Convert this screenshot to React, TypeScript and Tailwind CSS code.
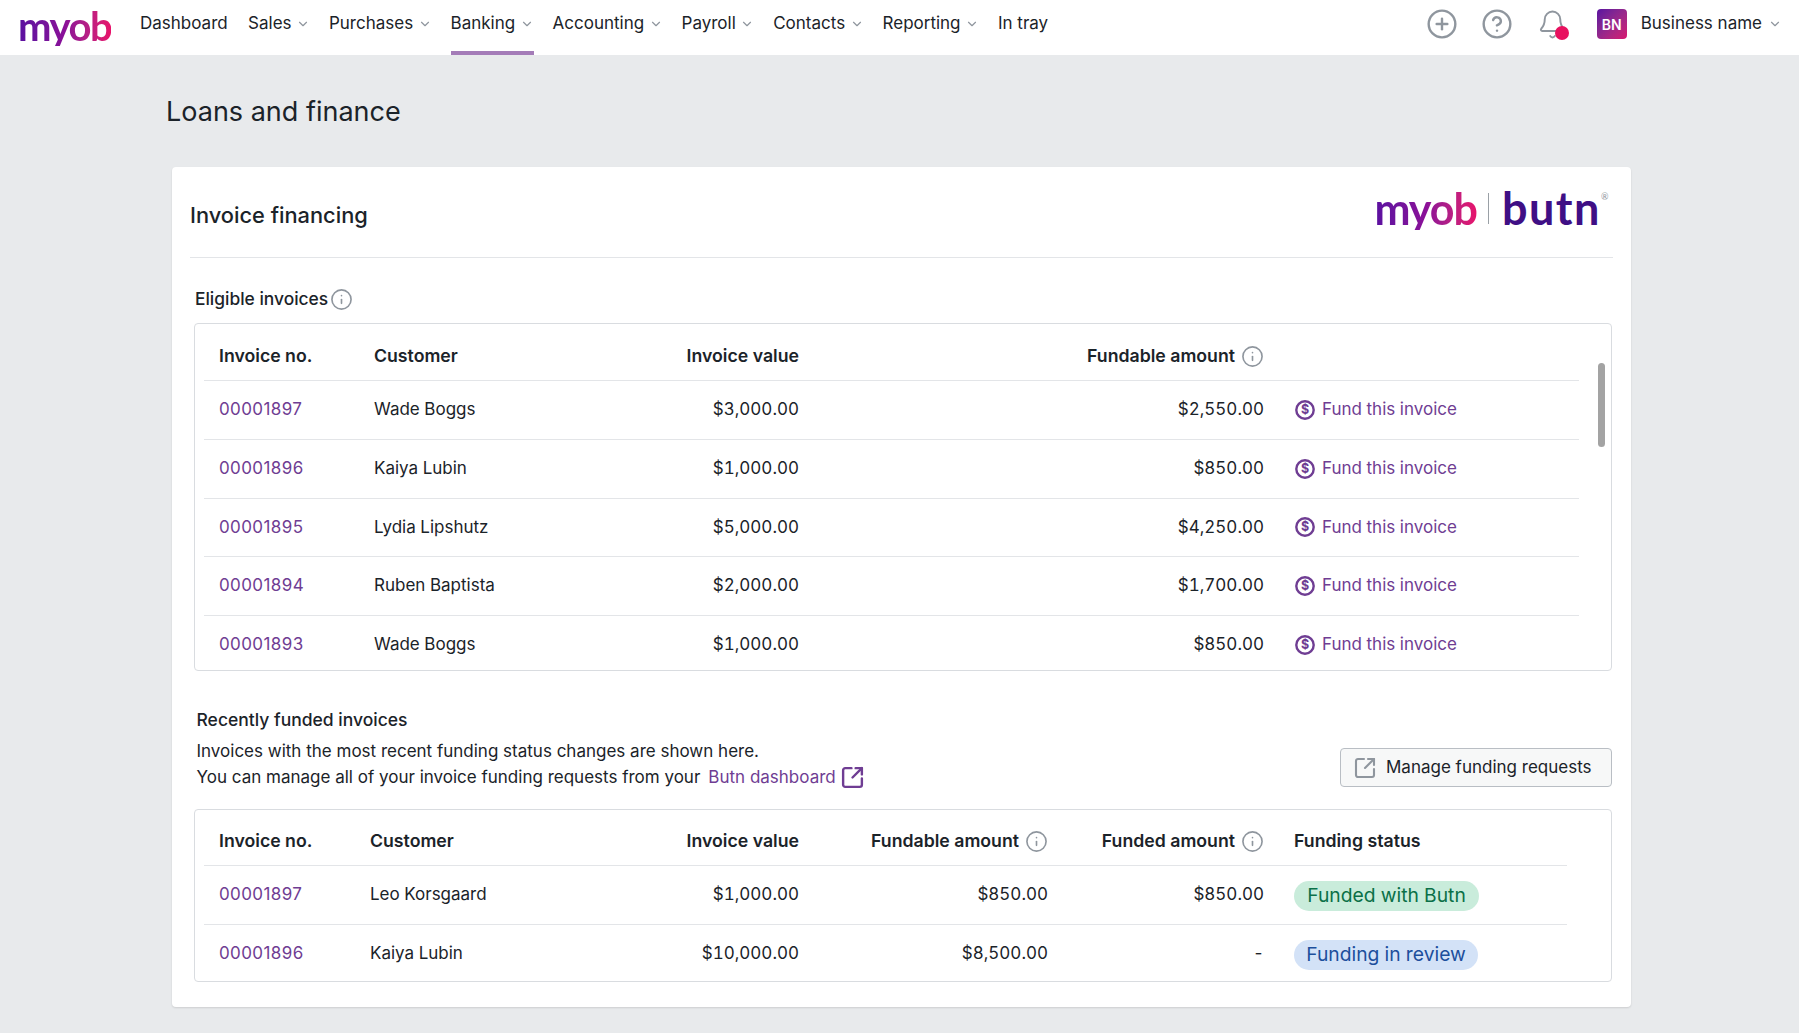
import { Bell, ChevronDown, CircleHelp, CirclePlus, Info, SquareArrowOutUpRight } from "lucide-react";

type NavItem = { label: string; menu: boolean; active?: boolean };

const navItems: NavItem[] = [
    { label: "Dashboard", menu: false },
    { label: "Sales", menu: true },
    { label: "Purchases", menu: true },
    { label: "Banking", menu: true, active: true },
    { label: "Accounting", menu: true },
    { label: "Payroll", menu: true },
    { label: "Contacts", menu: true },
    { label: "Reporting", menu: true },
    { label: "In tray", menu: false },
];

const eligible = [
    ["00001897", "Wade Boggs", "$3,000.00", "$2,550.00"],
    ["00001896", "Kaiya Lubin", "$1,000.00", "$850.00"],
    ["00001895", "Lydia Lipshutz", "$5,000.00", "$4,250.00"],
    ["00001894", "Ruben Baptista", "$2,000.00", "$1,700.00"],
    ["00001893", "Wade Boggs", "$1,000.00", "$850.00"],
];

const funded = [
    { no: "00001897", customer: "Leo Korsgaard", value: "$1,000.00", fundable: "$850.00", amount: "$850.00", status: "Funded with Butn", badge: "bg-[#c9ecdb] text-[#0b7048] w-[185px]" },
    { no: "00001896", customer: "Kaiya Lubin", value: "$10,000.00", fundable: "$8,500.00", amount: "-", status: "Funding in review", badge: "bg-[#d3e2f7] text-[#1d4f9c] w-[184px]" },
];

const eligibleCols = "grid grid-cols-[155px_200px_225px_465px_1fr] items-center pl-[15px]";
const fundedCols = "grid grid-cols-[151px_200px_229px_249px_216px_1fr] items-center pl-[15px]";
const headCell = "flex items-center justify-end gap-[6px]";
const invoiceLink = "font-normal normal-nums tracking-[0.4px] text-[#6f3d93]";

function Logo({ className }: { className: string }) {
    return (
        <span className={`bg-gradient-to-r from-[#5a0fa0] via-[#8a0f98] to-[#e8116a] bg-clip-text font-['Lato',sans-serif] font-bold text-transparent ${className}`}>
            myob
        </span>
    );
}

function InfoIcon() {
    return <Info size={23} strokeWidth={1.7} className="shrink-0 text-[#8f969e]" />;
}

function DollarIcon() {
    return (
        <svg viewBox="0 0 20 20" className="h-[20px] w-[20px] shrink-0">
            <circle cx="10" cy="10" r="8.7" fill="none" stroke="currentColor" strokeWidth="2.4" />
            <text x="10" y="14.4" textAnchor="middle" fontSize="12.5" fontWeight="700" fill="currentColor">
                $
            </text>
        </svg>
    );
}

export default function App() {
    return (
        <div className="min-h-screen bg-[#e8eaec] font-['Inter',sans-serif] text-[17px] text-[#1b2329]">
            <header className="flex h-[55px] items-stretch bg-white">
                <div className="flex w-[140px] shrink-0 items-center pb-[4px] pl-[18px]">
                    <Logo className="text-[40px] leading-none tracking-[-1.5px]" />
                </div>
                <nav className="flex gap-[19px]">
                    {navItems.map((item) => (
                        <div
                            key={item.label}
                            className={`flex items-center gap-[4.4px] border-b-[4px] pb-[7px] pt-[3px] first:mr-[1.4px] ${item.active ? "border-[#a47cb8]" : "border-transparent"}`}
                        >
                            <span>{item.label}</span>
                            {item.menu && <ChevronDown size={14} className="text-[#8f969e]" />}
                        </div>
                    ))}
                </nav>
                <div className="ml-auto flex items-center pb-[11px] pr-[17px] pt-[4px] text-[#8f969e]">
                    <CirclePlus size={32} strokeWidth={1.8} />
                    <CircleHelp size={32} strokeWidth={1.8} className="ml-[23px]" />
                    <div className="relative ml-[24px]">
                        <Bell size={31} strokeWidth={1.5} />
                        <span className="absolute left-[18px] top-[17px] h-[14px] w-[14px] rounded-full bg-[#e8115f]" />
                    </div>
                    <div className="ml-[29px] flex h-[30px] w-[30px] items-center justify-center rounded-[4px] bg-gradient-to-br from-[#5a0fa0] to-[#d8116f] text-[14px] font-semibold text-white">
                        BN
                    </div>
                    <span className="ml-[14px] text-[#1b2329]">Business name</span>
                    <ChevronDown size={14} className="ml-[6px]" />
                </div>
            </header>

            <main className="pb-[26px] pl-[166px]">
                <h1 className="pb-[36px] pt-[38px] text-[27px] font-normal leading-[38px]">Loans and finance</h1>

                <section className="ml-[6px] w-[1459px] rounded-[4px] bg-white px-[18px] shadow-[0_1px_2px_rgba(0,0,0,0.12)]">
                    <div className="flex h-[91px] items-center justify-between border-b border-[#e3e5e8]">
                        <h2 className="pt-[7px] text-[21.8px] font-medium">Invoice financing</h2>
                        <div className="flex items-center pb-[8px] pr-[12px]">
                            <Logo className="text-[43px] leading-none tracking-[-1px]" />
                            <span className="ml-[11px] mr-[13px] h-[31px] w-px bg-[#9aa0a6]" />
                            <span className="relative font-['Lato',sans-serif] text-[45px] font-bold leading-none tracking-[1.5px] text-[#3f0f85]">
                                butn
                                <span className="absolute right-[-9px] top-[6px] text-[9px] font-normal leading-none text-[#8f969e]">®</span>
                            </span>
                        </div>
                    </div>

                    <div className="flex items-center gap-[2px] pl-[5px] pt-[28px] text-[17.4px] font-medium">
                        <span>Eligible invoices</span>
                        <InfoIcon />
                    </div>

                    <div className="relative ml-[4px] mt-[11px] h-[348px] w-[1418px] overflow-hidden rounded-[4px] border border-[#d9dce0] pl-[9px]">
                        <div className="w-[1375px]">
                            <div className={`${eligibleCols} h-[57px] border-b border-[#e3e5e8] pt-[8px] text-[17.7px] font-semibold`}>
                                <span>Invoice no.</span>
                                <span className="col-span-2 flex justify-between">
                                    <span>Customer</span>
                                    <span>Invoice value</span>
                                </span>
                                <span className={headCell}>
                                    Fundable amount <InfoIcon />
                                </span>
                            </div>
                            {eligible.map((row, i) => (
                                <div key={row[0]} className={`${eligibleCols} h-[58.75px] border-b tabular-nums ${i < 4 ? "border-[#e3e5e8]" : "border-transparent"}`}>
                                    <a className={invoiceLink}>{row[0]}</a>
                                    <span>{row[1]}</span>
                                    <span className="text-right">{row[2]}</span>
                                    <span className="text-right">{row[3]}</span>
                                    <span className="ml-[31px] flex items-center gap-[7px] whitespace-nowrap text-[#6f3d93]">
                                        <DollarIcon />
                                        Fund this invoice
                                    </span>
                                </div>
                            ))}
                        </div>
                        <div className="absolute left-[1403px] top-[39px] h-[84px] w-[7px] rounded-[4px] bg-[#a3a3a3]" />
                    </div>

                    <div className="flex items-end justify-between pl-[6.5px] pr-[1px] pt-[36px]">
                        <div className="leading-[26px]">
                            <h3 className="pb-[5px] text-[17.5px] font-medium">Recently funded invoices</h3>
                            <p>Invoices with the most recent funding status changes are shown here.</p>
                            <p className="flex items-center">
                                You can manage all of your invoice funding requests from your
                                <a className="ml-[8px] text-[#6f3d93]">Butn dashboard</a>
                                <SquareArrowOutUpRight size={25} strokeWidth={2.3} className="ml-[4px] text-[#6f3d93]" />
                            </p>
                        </div>
                        <button className="mb-[3px] flex h-[39px] w-[272px] items-center gap-[9px] rounded-[4px] border border-[#b9bec4] bg-[#f7f8f8] pl-[12px]">
                            <SquareArrowOutUpRight size={24} strokeWidth={2.1} className="text-[#8f969e]" />
                            Manage funding requests
                        </button>
                    </div>

                    <div className="ml-[4px] mt-[19px] h-[173px] w-[1418px] rounded-[4px] border border-[#d9dce0] pl-[9px]">
                        <div className="w-[1363px]">
                            <div className={`${fundedCols} h-[56px] border-b border-[#e3e5e8] pt-[7px] text-[17.7px] font-semibold`}>
                                <span>Invoice no.</span>
                                <span className="col-span-2 flex justify-between">
                                    <span>Customer</span>
                                    <span>Invoice value</span>
                                </span>
                                <span className={headCell}>
                                    Fundable amount <InfoIcon />
                                </span>
                                <span className={headCell}>
                                    Funded amount <InfoIcon />
                                </span>
                                <span className="ml-[30px]">Funding status</span>
                            </div>
                            {funded.map((row, i) => (
                                <div key={row.status} className={`${fundedCols} h-[58.5px] tabular-nums ${i === 0 ? "border-b border-[#e3e5e8]" : ""}`}>
                                    <a className={invoiceLink}>{row.no}</a>
                                    <span>{row.customer}</span>
                                    <span className="text-right">{row.value}</span>
                                    <span className="text-right">{row.fundable}</span>
                                    <span className="text-right">{row.amount}</span>
                                    <span className={`ml-[30px] mt-[2px] flex h-[30px] items-center justify-center rounded-full text-[19.3px] ${row.badge}`}>{row.status}</span>
                                </div>
                            ))}
                        </div>
                    </div>
                    <div className="h-[25px]" />
                </section>
            </main>
        </div>
    );
}
